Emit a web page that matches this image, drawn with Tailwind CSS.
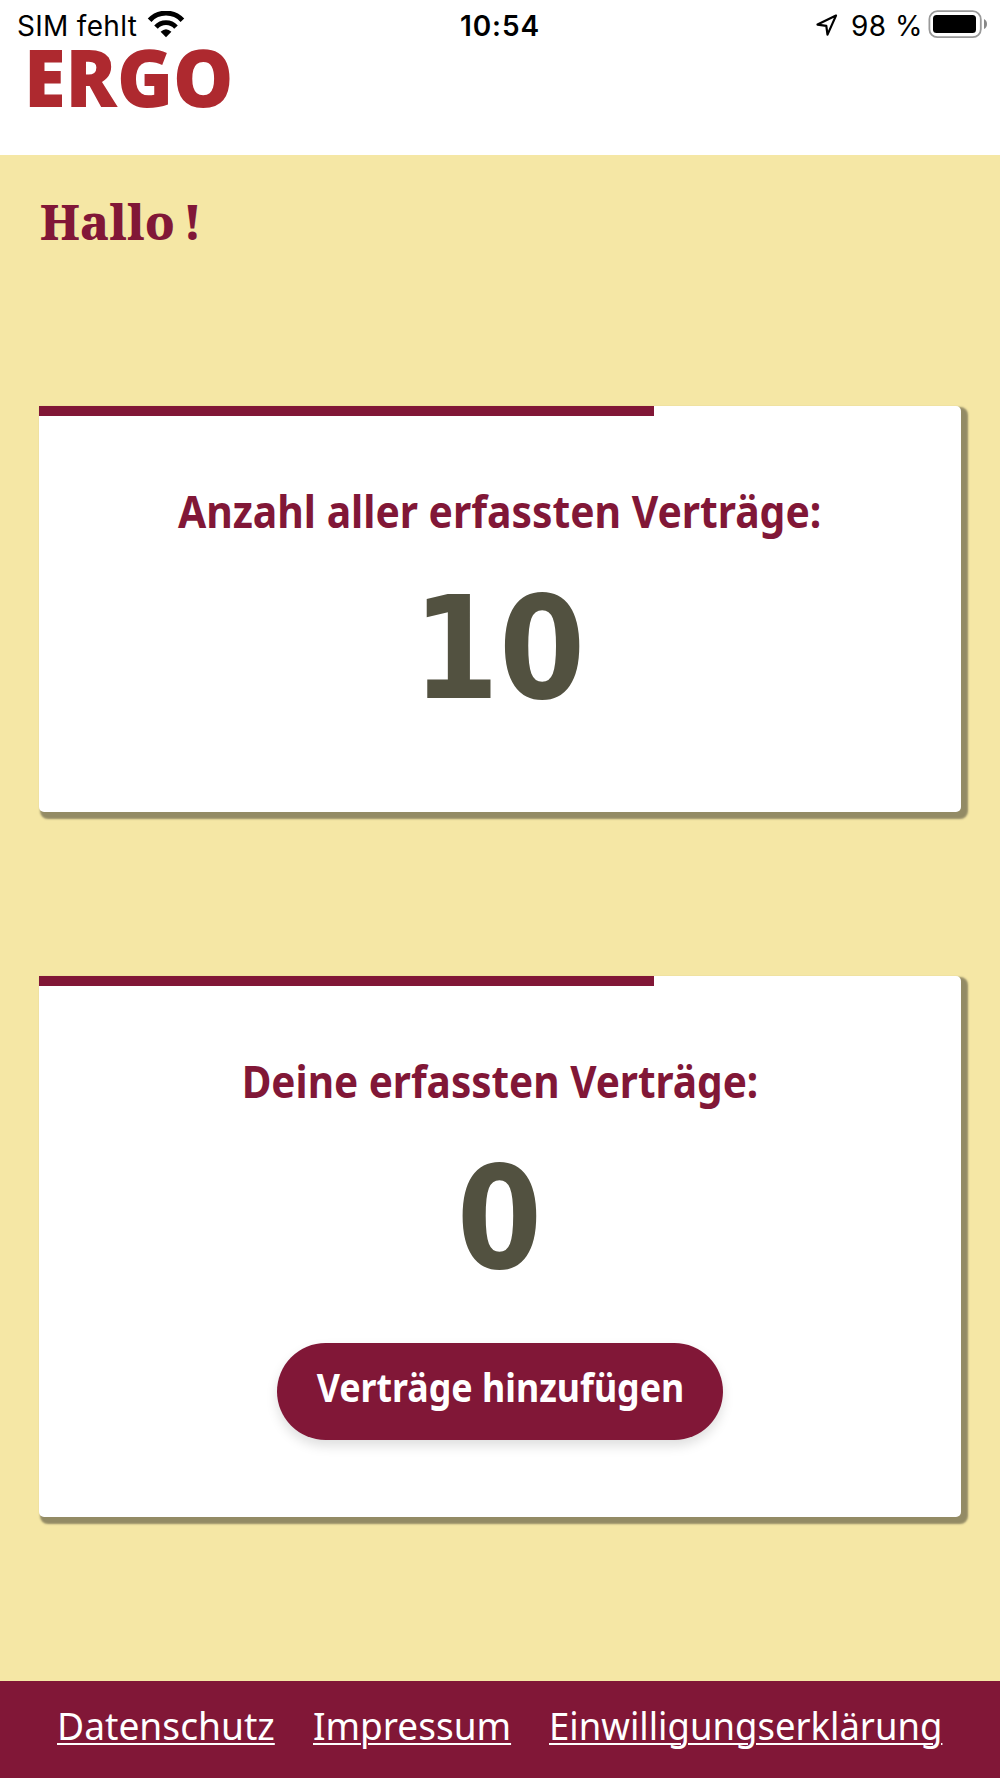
<!DOCTYPE html>
<html lang="de">
<head>
<meta charset="utf-8">
<title>ERGO</title>
<script src="https://cdn.jsdelivr.net/npm/@tailwindcss/browser@4"></script>
</head>
<body class="flex h-[1778px] w-[1000px] flex-col overflow-hidden bg-[#f5e7a5] font-['Noto_Sans',sans-serif] text-[#811737]">
  <header class="h-[155px] shrink-0 bg-white">
    <div class="grid h-10 grid-cols-3 pt-[11px] font-['Inter',sans-serif] text-[28px] leading-[30px] text-black">
      <div class="flex pl-[17px]">
        <span class="w-[130px] whitespace-nowrap tracking-[0.3px]">SIM fehlt</span>
        <svg class="h-[30px] w-[38px]" viewBox="147 11 38 30" fill="none" stroke="#000">
          <path d="M149.6 20.3a22.3 22.3 0 0 1 32.8 0" stroke-width="5"/>
          <path d="M156 27.2a13.4 13.4 0 0 1 20 0" stroke-width="4.8"/>
          <path d="M160.6 31.8q5.4-5 10.8 0L166 37.2z" fill="#000" stroke="none"/>
        </svg>
      </div>
      <div class="text-center font-semibold tracking-[0.9px]">10:54</div>
      <div class="flex justify-end pr-3">
        <svg class="mr-3 h-[30px] w-6" viewBox="815 11 24 30" fill="none" stroke="#000" stroke-width="2.2" stroke-linejoin="round">
          <path d="M836 15.6 817.5 24.6l8.8 1.2 1.2 8.8z"/>
        </svg>
        <span class="w-[77px] whitespace-nowrap tracking-[0.5px]">98 %</span>
        <svg class="h-[30px] w-[60px]" viewBox="928 11 60 30" overflow="visible">
          <rect x="929.4" y="11.2" width="51.4" height="26" rx="8" fill="none" stroke="#999" stroke-width="1.8"/>
          <rect x="933" y="15" width="43" height="18" rx="3.5"/>
          <path d="M984 19q3 1.5 3 5t-3 5z" fill="#888"/>
        </svg>
      </div>
    </div>
    <div class="ml-[24px] mt-[5px] w-fit origin-left scale-x-[.96] font-['Open_Sans',sans-serif] text-[79px] leading-[64px] font-extrabold text-[#ae292f]">ERGO</div>
  </header>

  <main class="flex grow flex-col px-[39px] pt-[39px]">
    <h1 class="pl-px font-['Noto_Serif',serif] text-[48px] leading-[56px] font-extrabold [word-spacing:-4px]">Hallo !</h1>

    <section class="mt-[156px] flex h-[405.5px] w-[922px] flex-col items-center rounded-[5px] rounded-tl-none bg-white shadow-[4px_4px_2px_3px_#938b65]">
      <div class="h-[9.5px] w-[615px] self-start bg-[#811737]"></div>
      <h2 class="mt-[65.5px] scale-x-[.907] text-[45px] leading-[60px] font-bold whitespace-nowrap">Anzahl aller erfassten Verträge:</h2>
      <div class="mt-[38px] -translate-x-px scale-x-[.97] font-['DejaVu_Sans_Condensed','DejaVu_Sans',sans-serif] text-[142px] leading-[140px] font-bold text-[#525140]">10</div>
    </section>

    <section class="mt-[164.5px] flex h-[540.5px] w-[922px] flex-col items-center rounded-[5px] rounded-tl-none bg-white shadow-[4px_4px_2px_3px_#938b65]">
      <div class="h-[9.5px] w-[615px] self-start bg-[#811737]"></div>
      <h2 class="mt-[65.5px] scale-x-[.9] text-[45px] leading-[60px] font-bold whitespace-nowrap">Deine erfassten Verträge:</h2>
      <div class="mt-[38px] -translate-x-px scale-x-[.96] font-['DejaVu_Sans_Condensed','DejaVu_Sans',sans-serif] text-[142px] leading-[140px] font-bold text-[#525140]">0</div>
      <button class="mt-[54px] flex h-[97px] w-[446px] justify-center rounded-full bg-[#811737] text-[39px] leading-[87px] font-bold text-white shadow-[0_6px_12px_rgba(0,0,0,0.13)]"><span class="scale-x-[.917] whitespace-nowrap">Verträge hinzufügen</span></button>
    </section>
  </main>

  <footer class="flex h-[97px] shrink-0 gap-[38px] bg-[#811737] pt-5 pl-[57px] text-[39px] leading-[48px] text-white">
    <a class="w-[218px]"><span class="inline-block origin-left scale-x-[.953] underline decoration-2 underline-offset-[3px]">Datenschutz</span></a>
    <a class="w-[198px]"><span class="inline-block origin-left scale-x-[.948] underline decoration-2 underline-offset-[3px]">Impressum</span></a>
    <a class="w-[393px]"><span class="inline-block origin-left scale-x-[.935] underline decoration-2 underline-offset-[3px]">Einwilligungserklärung</span></a>
  </footer>
</body>
</html>
